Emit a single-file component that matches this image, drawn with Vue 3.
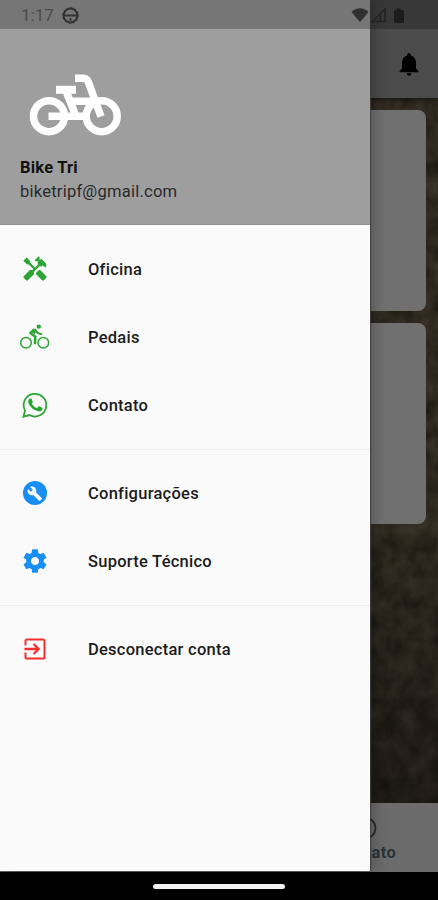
<script setup>
const groups = [
  [
    { label: 'Oficina', icon: 'tools', color: 'green' },
    { label: 'Pedais', icon: 'cyclist', color: 'green' },
    { label: 'Contato', icon: 'whatsapp', color: 'green' },
  ],
  [
    { label: 'Configurações', icon: 'wrench', color: 'blue' },
    { label: 'Suporte Técnico', icon: 'gear', color: 'blue' },
  ],
  [{ label: 'Desconectar conta', icon: 'exit', color: 'red' }],
]
</script>

<template>
  <div class="phone">
    <div class="page">
      <header class="appbar">
        <svg class="bell" viewBox="0 0 24 24"><path d="M12 22c1.1 0 2-.9 2-2h-4c0 1.100.9 2 2 2zm6-6v-5c0-3.070-1.640-5.640-4.500-6.320V4c0-.830-.670-1.500-1.500-1.500s-1.500.670-1.500 1.500v.680C7.630 5.360 6 7.920 6 11v5l-2 2v1h16v-1l-2-2z" /></svg>
      </header>
      <main class="content">
        <svg class="texture" width="100%" height="100%">
          <filter id="grain" x="0" y="0" width="100%" height="100%" color-interpolation-filters="sRGB">
            <feTurbulence type="fractalNoise" baseFrequency="0.06 0.05" numOctaves="4" seed="8" />
            <feColorMatrix values="0.16 0 0 0 0.1  0.15 0 0 0 0.08  0.13 0 0 0 0.055  0 0 0 0 1" />
          </filter>
          <rect width="100%" height="100%" filter="url(#grain)" />
        </svg>
        <div class="card"></div>
        <div class="card"></div>
      </main>
      <footer class="tabs">
        <div class="tab">
          <svg viewBox="0 0 24 24" width="24" height="24"><circle cx="12" cy="12" r="10.500" fill="none" stroke="#252a2d" stroke-width="1.700" /></svg>
          <span>Contato</span>
        </div>
      </footer>
    </div>

    <aside class="drawer">
      <div class="profile">
        <svg class="bike" viewBox="0 0 96 68" width="96" height="68" fill="none" stroke="#fff" stroke-width="7.500">
          <circle cx="21" cy="45.200" r="15.500" />
          <circle cx="73.700" cy="45.200" r="15.500" />
          <path d="M20.500 45.200H58M42 30.200H66M38 20L48 45.200" />
          <path d="M28 18.800H48" stroke-width="8" />
          <path d="M47 7.300H55.500Q59 7.300 60.500 11.500L73 45.500" />
        </svg>
        <strong>Bike Tri</strong>
        <span>biketripf@gmail.com</span>
      </div>
      <nav class="menu">
        <ul v-for="(group, g) in groups" :key="g">
          <li v-for="item in group" :key="item.label">
            <span class="icon" :class="item.color">
              <svg v-if="item.icon === 'tools'" viewBox="0 0 24 24">
                <path d="M21.670 18.170l-5.300-5.300h-.990l-2.540 2.540v.990l5.300 5.300c.390.390 1.020.390 1.410 0l2.120-2.120c.390-.380.390-1.020 0-1.410z" />
                <path d="M17.340 10.190l1.410-1.410 2.120 2.120c1.170-1.170 1.170-3.070 0-4.240l-3.540-3.540-1.410 1.410V1.710L15.220 1l-3.540 3.540.710.710h2.830l-1.410 1.410 1.060 1.060-2.890 2.890-4.130-4.130V5.060L4.830 2.040 2 4.870 5.030 7.900h1.410l4.130 4.130-.850.850H7.600l-5.300 5.300c-.390.390-.390 1.020 0 1.410l2.120 2.120c.390.390 1.020.390 1.410 0l5.300-5.300v-2.120l5.150-5.150z" />
              </svg>
              <svg v-else-if="item.icon === 'cyclist'" class="wide" viewBox="0 0 30 28" fill="none" stroke="currentColor">
                <circle cx="7" cy="19.700" r="5.300" stroke-width="1.500" />
                <circle cx="24.300" cy="19.700" r="5.300" stroke-width="1.500" />
                <circle cx="19.800" cy="3.600" r="2.200" fill="currentColor" stroke="none" />
                <path d="M15.600 6.300L11.400 9.900L16.300 13.800L16 21.200" stroke-width="2.500" stroke-linejoin="round" />
                <path d="M15.800 6.200L18.600 10L23.200 11.400" stroke-width="2" stroke-linejoin="round" />
                <path d="M13.500 7.700L16.300 10.400" stroke-width="2.400" />
              </svg>
              <svg v-else-if="item.icon === 'whatsapp'" viewBox="0 0 24 24">
                <path d="M2.200 21.800L3.700 16.600A9.700 9.700 0 1 1 7.500 20.400Z" fill="none" stroke="currentColor" stroke-width="1.500" transform="translate(-.2 .2)" />
                <path d="M17.200 14.400c-.3-.15-1.700-.85-2-.95-.26-.1-.46-.15-.65.150l-.9 1.120c-.17.200-.34.220-.64.070-.3-.15-1.240-.46-2.350-1.450-.87-.78-1.450-1.730-1.620-2.030-.17-.3-.02-.46.130-.6l.64-.84c.07-.2.030-.37-.04-.52l-.9-2.150c-.24-.57-.48-.5-.65-.5h-.56c-.2 0-.52.070-.8.370-.26.300-1.020 1-1.020 2.420s1.050 2.800 1.200 3c.150.200 2.060 3.140 5 4.400 2.080.9 2.900.97 3.940.82.630-.1 1.770-.72 2.020-1.420.25-.7.250-1.300.170-1.420-.07-.13-.26-.2-.55-.35z" transform="translate(.3 -.3)" />
              </svg>
              <svg v-else-if="item.icon === 'wrench'" viewBox="0 0 24 24">
                <circle cx="12" cy="12" r="10.300" />
                <path d="M17.900 16.400L12.900 11.400C13.400 10.100 13.100 8.700 12.100 7.600C10.900 6.400 9.200 6.200 7.800 6.800L10.200 9.200L8.500 10.900L6 8.500C5.300 9.900 5.600 11.700 6.800 12.800C7.800 13.900 9.300 14.100 10.500 13.700L15.500 18.700Q15.900 19.100 16.300 18.700L17.900 17.200Q18.300 16.800 17.900 16.400Z" fill="#fafafa" />
              </svg>
              <svg v-else-if="item.icon === 'gear'" viewBox="0 0 24 24">
                <path d="M19.430 12.980c.04-.320.070-.640.070-.980s-.030-.660-.070-.980l2.110-1.650c.190-.150.240-.420.120-.640l-2-3.460c-.120-.220-.390-.300-.610-.220l-2.490 1c-.520-.400-1.080-.730-1.690-.980l-.380-2.650C14.460 2.180 14.250 2 14 2h-4c-.250 0-.460.180-.490.420l-.380 2.650c-.610.250-1.170.590-1.690.980l-2.490-1c-.230-.090-.490 0-.610.220l-2 3.460c-.130.220-.070.490.120.640l2.110 1.650c-.040.320-.070.650-.070.980s.030.660.070.980l-2.110 1.650c-.190.150-.240.420-.120.640l2 3.460c.120.220.390.300.610.220l2.490-1c.520.400 1.080.730 1.690.980l.380 2.650c.030.240.240.420.490.420h4c.250 0 .460-.180.490-.420l.380-2.650c.610-.250 1.170-.590 1.690-.980l2.490 1c.230.090.490 0 .610-.220l2-3.460c.120-.220.070-.490-.120-.640l-2.110-1.650zM12 15.500c-1.930 0-3.500-1.570-3.500-3.500s1.570-3.500 3.500-3.500 3.500 1.570 3.500 3.500-1.570 3.500-3.500 3.500z" />
              </svg>
              <svg v-else viewBox="0 0 24 24">
                <path d="M10.090 15.590L11.500 17l5-5-5-5-1.410 1.410L12.670 11H3v2h9.670l-2.580 2.590zM19 3H5c-1.110 0-2 .900-2 2v4h1.700V4.700h14.600v14.600H4.700V15H3v4c0 1.100.890 2 2 2h14c1.100 0 2-.900 2-2V5c0-1.100-.900-2-2-2z" />
              </svg>
            </span>
            <span class="label">{{ item.label }}</span>
          </li>
        </ul>
      </nav>
    </aside>

    <div class="status">
      <span class="time">1:17</span>
      <svg class="notice" viewBox="0 0 16 16" width="17" height="17" fill="none" stroke="#323232">
        <circle cx="8" cy="8" r="6.500" stroke-width="1.900" />
        <circle cx="8" cy="8" r="7.300" stroke-width="1" stroke-dasharray="1.500 2.320" />
        <path d="M2 8H14M8 10.500V13" stroke-width="1.900" />
      </svg>
      <svg class="signals" viewBox="0 0 56 18" width="56" height="18" fill="#303030">
        <path d="M.5 6Q9 -1.500 17.500 6L9 16Z" />
        <path d="M21.500 15.500L34 3V15.500Z" fill="none" stroke="#222" stroke-width="1.500" />
        <path d="M29.500 8V15" stroke="#222" stroke-width="1.200" />
        <path d="M45.500 2.500h4v1.500h2q1.500 0 1.500 1.500v10q0 1.500-1.500 1.500h-7q-1.500 0-1.500-1.500v-10q0-1.500 1.500-1.500h1z" fill="#1c1c1c" />
      </svg>
    </div>

    <div class="sysnav"><div class="handle"></div></div>
  </div>
</template>

<style>
body {
  margin: 0;
  background: #000;
}
</style>

<style scoped>
.phone {
  position: relative;
  width: 438px;
  height: 900px;
  overflow: hidden;
  display: flex;
  flex-direction: column;
  font-family: Roboto, "Liberation Sans", sans-serif;
}
.page {
  height: 872px;
  display: flex;
  flex-direction: column;
}
.appbar {
  box-sizing: border-box;
  height: 98px;
  padding: 29px 15px 0 0;
  display: flex;
  align-items: center;
  justify-content: flex-end;
  background: #4b4b4b;
  box-shadow: 0 1px 4px #111;
  z-index: 1;
}
.bell {
  width: 28px;
  height: 28px;
}
.content {
  position: relative;
  box-sizing: border-box;
  flex: 1;
  padding: 12px 12px 0;
  display: flex;
  flex-direction: column;
  gap: 12px;
  overflow: hidden;
  background: #2b251e;
}
.texture {
  position: absolute;
  inset: 0;
}
.content::before {
  content: "";
  position: absolute;
  inset: 0;
  z-index: 1;
  background: linear-gradient(rgba(0, 0, 0, 0) 0 55%, rgba(0, 0, 0, 0.15) 75%, rgba(0, 0, 0, 0.35));
}
.card {
  position: relative;
  z-index: 2;
  height: 201px;
  border-radius: 8px;
  background: #707070;
}
.tabs {
  box-sizing: border-box;
  height: 69px;
  padding: 13px 42px 0 0;
  display: flex;
  justify-content: flex-end;
  background: #6b6b6b;
}
.tab {
  display: flex;
  flex-direction: column;
  align-items: center;
  gap: 3px;
  font-size: 16.5px;
  line-height: 20px;
  font-weight: 700;
  letter-spacing: 0.3px;
  color: #2b343b;
}
.tab svg {
  margin-right: 2px;
}
.drawer {
  position: absolute;
  left: 0;
  top: 0;
  width: 370px;
  height: 871px;
  z-index: 2;
  display: flex;
  flex-direction: column;
  background: #fafafa;
  box-shadow: 1px 0 1px rgba(65, 65, 65, 0.8), 2px 0 14px rgba(0, 0, 0, 0.3);
}
.profile {
  box-sizing: border-box;
  height: 225px;
  padding: 71px 20px 0;
  display: flex;
  flex-direction: column;
  align-items: flex-start;
  background: #9e9e9e;
  border-bottom: 1px solid #8f8f8f;
  color: #111;
  font-size: 16.6px;
}
.profile strong {
  margin-top: 17px;
  line-height: 24px;
  font-weight: 700;
  font-size: 16.5px;
  letter-spacing: 0.2px;
}
.profile span {
  line-height: 24px;
  letter-spacing: 0.2px;
  color: #2a2a2a;
}
.bike {
  margin-left: 8px;
}
.menu {
  padding-top: 10px;
}
.menu ul {
  margin: 0;
  padding: 0;
  list-style: none;
}
.menu ul + ul::before {
  content: "";
  display: block;
  height: 1px;
  margin: 10px 0 9px;
  background: #eeeeee;
}
.menu li {
  height: 68px;
  display: flex;
  align-items: center;
}
.icon {
  width: 28px;
  height: 28px;
  margin: 0 39px 0 21px;
  display: flex;
}
.icon svg {
  width: 28px;
  height: 28px;
  flex: none;
}
.icon svg:not([fill]) {
  fill: currentColor;
}
.icon .wide {
  width: 30px;
  margin-left: -2px;
}
.green {
  color: #2ba535;
}
.blue {
  color: #188df2;
}
.red {
  color: #f52c2c;
}
.label {
  padding-top: 2px;
  font-size: 16.5px;
  font-weight: 500;
  line-height: 24px;
  letter-spacing: 0.25px;
  color: #1c1c1c;
  white-space: nowrap;
}
.status {
  position: absolute;
  left: 0;
  top: 0;
  width: 438px;
  height: 29px;
  box-sizing: border-box;
  padding: 1px 31px 0 21px;
  z-index: 3;
  display: flex;
  align-items: center;
  background: rgba(0, 0, 0, 0.25);
}
.time {
  width: 41px;
  font-size: 17px;
  color: #4c4c4c;
}
.signals {
  margin-left: auto;
}
.sysnav {
  height: 28px;
  display: flex;
  justify-content: center;
  align-items: center;
  background: #000;
}
.handle {
  width: 132px;
  height: 5px;
  border-radius: 3px;
  background: #f4f4f4;
}
</style>
